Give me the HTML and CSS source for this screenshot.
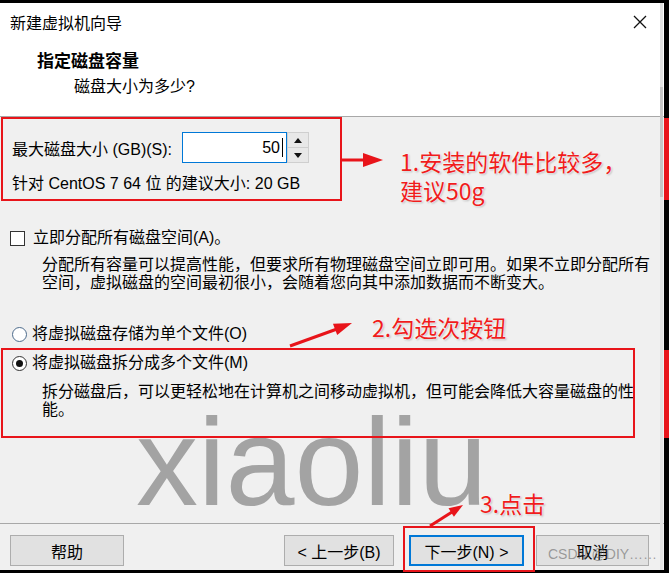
FILE: index.html
```html
<!DOCTYPE html>
<html lang="zh-CN">
<head>
<meta charset="utf-8">
<title>新建虚拟机向导</title>
<link rel="stylesheet" href="styles.css">
</head>
<body>
<div class="dialog">
  <div class="top">
    <div class="titlebar">
      <span class="title">新建虚拟机向导</span>
      <svg class="close" width="14" height="14" viewBox="0 0 14 14"><path d="M1 1L13 13M13 1L1 13" stroke="#111" stroke-width="1.3" fill="none"/></svg>
    </div>
    <div class="heading">指定磁盘容量</div>
    <div class="sub">磁盘大小为多少?</div>
  </div>
  <div class="content">
    <div class="size-row">
      <label class="size-label">最大磁盘大小 (GB)(S):</label>
      <div class="input"><span>50</span><i class="caret"></i></div>
      <div class="arrows">
        <span class="arr"><svg width="8" height="5" viewBox="0 0 8 5"><polygon points="4,0 8,5 0,5" fill="#111"/></svg></span>
        <span class="arr"><svg width="8" height="5" viewBox="0 0 8 5"><polygon points="0,0 8,0 4,5" fill="#111"/></svg></span>
      </div>
    </div>
    <div class="hint">针对 CentOS 7 64 位 的建议大小: 20 GB</div>
    <div class="check-row"><span class="checkbox"></span>立即分配所有磁盘空间(A)。</div>
    <p class="desc">分配所有容量可以提高性能，但要求所有物理磁盘空间立即可用。如果不立即分配所有<br>空间，虚拟磁盘的空间最初很小，会随着您向其中添加数据而不断变大。</p>
    <div class="radio-row first"><span class="radio"></span>将虚拟磁盘存储为单个文件(O)</div>
    <div class="radio-row second"><span class="radio checked"></span>将虚拟磁盘拆分成多个文件(M)</div>
    <p class="desc desc2">拆分磁盘后，可以更轻松地在计算机之间移动虚拟机，但可能会降低大容量磁盘的性<br>能。</p>
  </div>
  <div class="footer">
    <div class="btn help">帮助</div>
    <div class="btn prev">&lt; 上一步(B)</div>
    <div class="btn next">下一步(N) &gt;</div>
    <div class="btn cancel">取消</div>
  </div>
</div>
<div class="scrollbar"><div class="thumb"></div></div>
<div class="watermark">xiaoliu</div>
<svg class="annot" width="669" height="573" viewBox="0 0 669 573">
  <g fill="none" stroke="#e8141a" stroke-width="2">
    <rect x="2" y="118" width="339" height="82"/>
    <rect x="2" y="349" width="632" height="88"/>
    <rect x="404" y="527" width="130" height="44"/>
  </g>
  <rect x="664" y="118" width="5" height="82" fill="#e8141a"/>
  <rect x="664" y="350" width="5" height="88" fill="#e8141a"/>
  <g stroke="#e8141a" stroke-width="3" fill="#e8141a">
    <line x1="342" y1="160" x2="366" y2="160"/>
    <polygon stroke="none" points="383,160 363,153 363,167"/>
    <line x1="290" y1="346" x2="337" y2="329"/>
    <polygon stroke="none" points="352,323 337.2,334.9 333,323.7"/>
    <line x1="430" y1="526" x2="452" y2="512"/>
    <polygon stroke="none" points="463,505 453.9,516.7 448.5,508.3"/>
  </g>
</svg>
<div class="note note1">1.安装的软件比较多，<br>建议50g</div>
<div class="note note2">2.勾选次按钮</div>
<div class="note note3">3.点击</div>
<div class="csdn">CSDN @DIY……</div>
</body>
</html>
```
FILE: styles.css
```css
html, body {
  margin: 0;
  padding: 0;
}
body {
  position: relative;
  width: 669px;
  height: 573px;
  overflow: hidden;
  background: #000;
  font-family: "Liberation Sans", "Noto Sans CJK SC", sans-serif;
  color: #000;
}
.dialog {
  margin-top: 3px;
  width: 664px;
  height: 567px;
  background: #f0f0f0;
  display: flex;
  flex-direction: column;
}
.top {
  flex: none;
  height: 113px;
  background: #fff;
  border-bottom: 1px solid #a8a8a8;
}
.titlebar {
  height: 38px;
  display: flex;
  align-items: center;
  justify-content: space-between;
  padding: 0 17px 0 10px;
  font-size: 16px;
}
.heading {
  margin-top: 10px;
  padding-left: 37px;
  font-size: 17px;
  font-weight: bold;
  line-height: 22px;
}
.sub {
  margin-top: 3px;
  padding-left: 74px;
  font-size: 16px;
  line-height: 22px;
}
.content {
  flex: 1;
  padding-top: 15px;
  font-size: 16px;
}
.size-row {
  display: flex;
  align-items: center;
  height: 31px;
  padding-left: 12px;
}
.size-label {
  width: 170px;
}
.input {
  width: 105px;
  height: 31px;
  box-sizing: border-box;
  border: 1px solid #0078d7;
  background: #fff;
  display: flex;
  align-items: center;
  justify-content: flex-end;
  padding-right: 3px;
}
.caret {
  display: block;
  width: 1px;
  height: 19px;
  margin-left: 2px;
  background: #000;
}
.arrows {
  width: 22px;
  height: 31px;
  box-sizing: border-box;
  border: 1px solid #cfcfcf;
  display: flex;
  flex-direction: column;
  gap: 1px;
  background: #cfcfcf;
}
.arr {
  flex: 1;
  background: #e8e8e8;
  display: flex;
  align-items: center;
  justify-content: center;
}
.hint {
  margin-top: 10px;
  padding-left: 12px;
  line-height: 22px;
}
.check-row {
  margin-top: 32px;
  padding-left: 10px;
  display: flex;
  align-items: center;
  line-height: 22px;
}
.checkbox {
  width: 15px;
  height: 15px;
  box-sizing: border-box;
  border: 1px solid #333;
  background: #fff;
  margin-right: 8px;
}
.desc {
  margin: 7px 0 0;
  padding-left: 42px;
  line-height: 18px;
}
.desc2 {
  margin-top: 9px;
}
.radio-row {
  display: flex;
  align-items: center;
  padding-left: 12px;
  line-height: 22px;
}
.radio-row.first {
  margin-top: 31px;
}
.radio-row.second {
  margin-top: 7px;
}
.radio {
  width: 15px;
  height: 15px;
  box-sizing: border-box;
  border-radius: 50%;
  border: 1px solid #333;
  background: #fff;
  margin-right: 5px;
  display: flex;
  align-items: center;
  justify-content: center;
}
.radio-row.first .radio {
  border-color: #4d6b8c;
}
.radio.checked::after {
  content: "";
  width: 7px;
  height: 7px;
  border-radius: 50%;
  background: #111;
}
.footer {
  flex: none;
  height: 47px;
  box-sizing: border-box;
  border-top: 1px solid #a8a8a8;
  display: flex;
  align-items: flex-start;
  padding: 11px 15px 0 10px;
}
.btn {
  height: 31px;
  box-sizing: border-box;
  border: 1px solid #adadad;
  background: #e1e1e1;
  font-size: 16px;
  display: flex;
  align-items: center;
  justify-content: center;
}
.help { width: 114px; }
.prev { width: 110px; margin-left: auto; }
.next { width: 115px; margin-left: 15px; border: 2px solid #0078d7; }
.cancel { width: 113px; margin-left: 12px; }
.scrollbar {
  position: absolute;
  left: 660px;
  top: 3px;
  width: 3px;
  height: 567px;
  background: #e2e2e2;
}
.thumb {
  margin-top: 84px;
  height: 110px;
  background: #c6c6c6;
}
.watermark {
  position: absolute;
  left: 136px;
  top: 400px;
  font-family: "Liberation Sans", sans-serif;
  font-size: 124px;
  line-height: 1;
  color: #a3a3a3;
}
.annot {
  position: absolute;
  left: 0;
  top: 0;
}
.note {
  position: absolute;
  color: #f01c1c;
  font-family: "Noto Sans CJK SC", sans-serif;
  font-size: 23px;
  line-height: 29px;
  white-space: nowrap;
  text-shadow: 0 0 2px #fff, 0 0 2px #fff, 1px 1px 2px rgba(0,0,0,0.3);
}
.note1 { left: 400px; top: 147px; }
.note2 { left: 372px; top: 313px; }
.note3 { left: 480px; top: 489px; }
.csdn {
  position: absolute;
  left: 548px;
  top: 545px;
  font-size: 14px;
  line-height: 18px;
  color: rgba(90, 90, 90, 0.55);
  font-family: "Liberation Sans", "Noto Sans CJK SC", sans-serif;
}
```
